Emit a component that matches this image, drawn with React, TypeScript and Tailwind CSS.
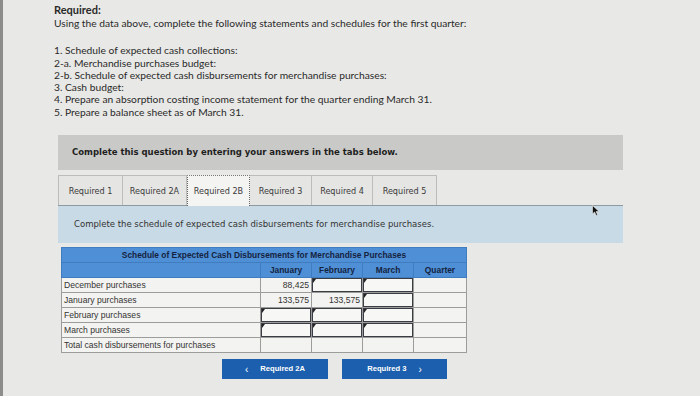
const rows = [
  { label: "December purchases", cells: [{ v: "88,425" }, { input: true }, { input: true }, {}] },
  { label: "January purchases", cells: [{ v: "133,575" }, { v: "133,575" }, { input: true }, {}] },
  { label: "February purchases", cells: [{ input: true }, { input: true }, { input: true }, {}] },
  { label: "March purchases", cells: [{ input: true }, { input: true }, { input: true }, {}] },
  { label: "Total cash disbursements for purchases", cells: [{}, {}, {}, {}] },
];

const tabs = [
  ["Required 1", "w-[65px]"],
  ["Required 2A", "w-[64px]"],
  ["Required 2B", "w-[63px]"],
  ["Required 3", "w-[62px]"],
  ["Required 4", "w-[61px]"],
  ["Required 5", "w-[64px]"],
];

type Cell = { v?: string; input?: boolean };

function DataCell({ cell }: { cell: Cell }) {
  return (
    <td className="border border-[#9c9c9a] bg-[#f3f3f1] p-0 h-[15px]">
      {cell.input ? (
        <div className="relative h-[14px] border border-[#3a3d44] bg-[#f7f7f5]">
          <span className="absolute left-0 top-0 w-0 h-0 border-t-[4px] border-t-[#222] border-r-[3px] border-r-transparent" />
        </div>
      ) : (
        <div className="h-[14px] text-right pr-[2px] leading-[14px] text-[#333]">{cell.v}</div>
      )}
    </td>
  );
}

export default function App() {
  return (
    <main className="relative w-[700px] h-[396px] overflow-hidden bg-[#e8e8e6] border-l-[3px] border-[#8c8c8a] font-['Lato',sans-serif] text-[#2a2a2a]">
      {/* Problem text */}
      <div className="pl-[51px] pt-[3px] text-[10.25px] leading-[12.3px]">
        <p className="font-bold text-[11px] leading-[14px]">Required:</p>
        <p>Using the data above, complete the following statements and schedules for the first quarter:</p>
        <ol className="mt-[15px]">
          <li>1. Schedule of expected cash collections:</li>
          <li>2-a. Merchandise purchases budget:</li>
          <li>2-b. Schedule of expected cash disbursements for merchandise purchases:</li>
          <li>3. Cash budget:</li>
          <li>4. Prepare an absorption costing income statement for the quarter ending March 31.</li>
          <li>5. Prepare a balance sheet as of March 31.</li>
        </ol>
      </div>

      {/* Question widget */}
      <section className="ml-[55px] mt-[17px] w-[565px] font-['DejaVu_Sans',sans-serif]">
        <div className="h-[35px] bg-[#c9c9c7] flex items-center pl-[14px] text-[8.5px] font-bold text-[#1e1e1e]">
          Complete this question by entering your answers in the tabs below.
        </div>

        <div className="mt-[5px] flex h-[31px] border-b border-[#8e9aa2]">
          {tabs.map(([name, w], i) => (
            <div
              key={name}
              className={`${w} flex items-center justify-center text-[8.1px] text-[#3a3a3a] border-t border-r border-[#bcbcba] ${
                i === 0 ? "border-l" : ""
              } ${i === 2 ? "bg-[#f4f4f2] border-x border-dotted border-x-[#666] border-t-[#777] -mb-px" : "bg-[#e5e5e3]"}`}
            >
              {name}
            </div>
          ))}
        </div>

        <div className="h-[37px] bg-[#c8dae5] flex items-center pl-[16px] text-[8.5px] text-[#333]">
          Complete the schedule of expected cash disbursements for merchandise purchases.
        </div>

        {/* Schedule table */}
        <div className="mt-[4px] ml-[3px] font-['Liberation_Sans',sans-serif] text-[8.6px]">
          <table className="border-collapse table-fixed w-[405px]">
            <colgroup>
              <col className="w-[199px]" />
              <col className="w-[51px]" />
              <col className="w-[51px]" />
              <col className="w-[51px]" />
              <col className="w-[53px]" />
            </colgroup>
            <thead>
              <tr className="h-[15px]">
                <th colSpan={5} className="bg-[#4e8fd6] border border-[#3f7cc0] text-[#15233f] font-bold text-center leading-[14px] text-[8.4px]">
                  Schedule of Expected Cash Disbursements for Merchandise Purchases
                </th>
              </tr>
              <tr className="h-[15px]">
                <th className="bg-[#4e8fd6] border border-[#3f7cc0]" />
                {["January", "February", "March", "Quarter"].map((m) => (
                  <th key={m} className="bg-[#4e8fd6] border border-[#3f7cc0] text-[#15233f] font-bold text-center leading-[14px] text-[8.4px]">
                    {m}
                  </th>
                ))}
              </tr>
            </thead>
            <tbody>
              {rows.map((r) => (
                <tr key={r.label} className="h-[15px]">
                  <td className="border border-[#9c9c9a] bg-[#f3f3f1] pl-[2px] leading-[14px] text-[#333]">{r.label}</td>
                  {r.cells.map((c, j) => (
                    <DataCell key={j} cell={c} />
                  ))}
                </tr>
              ))}
            </tbody>
          </table>
        </div>

        {/* Navigation */}
        <div className="mt-[6px] ml-[164px] flex gap-[14px] font-['Liberation_Sans',sans-serif] text-[7.6px] font-bold text-white">
          <button className="w-[106px] h-[20px] bg-[#1c5fae] flex items-center justify-center gap-[12px]">
            <span className="text-[10px] font-normal">&lsaquo;</span>
            Required 2A
          </button>
          <button className="w-[105px] h-[20px] bg-[#1c5fae] flex items-center justify-center gap-[12px]">
            Required 3
            <span className="text-[10px] font-normal">&rsaquo;</span>
          </button>
        </div>
      </section>

      {/* Mouse pointer */}
      <svg className="absolute left-[589px] top-[205px]" width="8" height="11" viewBox="0 0 8 11">
        <path d="M0.5 0.5 L0.5 9 L2.6 7 L4.2 10.5 L5.6 9.9 L4.1 6.5 L7 6.4 Z" fill="#111" stroke="#eee" strokeWidth="0.6" />
      </svg>
    </main>
  );
}
